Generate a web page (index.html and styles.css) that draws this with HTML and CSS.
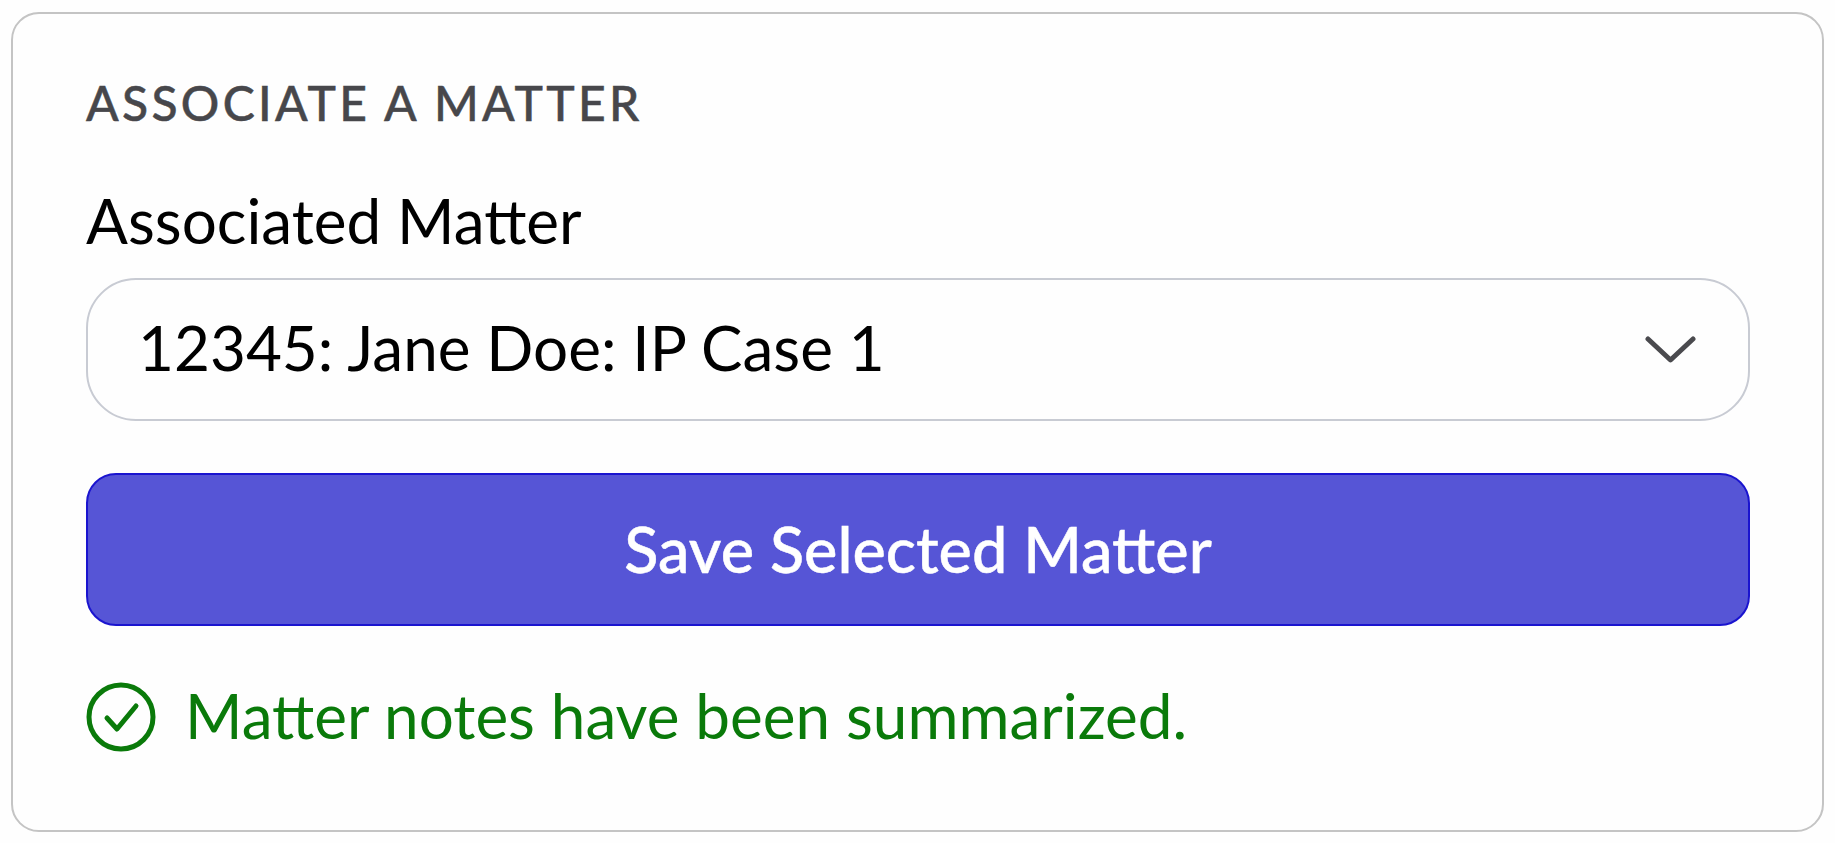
FILE: index.html
```html
<!DOCTYPE html>
<html lang="en">

<head>
    <meta charset="UTF-8">
    <meta name="viewport" content="width=device-width, initial-scale=1.0">
    <title>Associate a Matter</title>
    <link rel="stylesheet" href="styles.css">
</head>

<body>
    <div class="card">
        <h2 class="heading">ASSOCIATE A MATTER</h2>
        <label class="label">Associated Matter</label>
        <div class="select">
            <span class="select-text">12345: Jane Doe: IP Case 1</span>
            <svg class="chevron" viewBox="0 0 51 27" fill="none" stroke="#4a4a4e" stroke-width="5" stroke-linecap="round" stroke-linejoin="round">
                <path d="M3 3L25.500 24L48 3" />
            </svg>
        </div>
        <button class="save">Save Selected Matter</button>
        <div class="status">
            <svg class="check" viewBox="0 0 70 70" fill="none" stroke="#0a7a0a" stroke-width="5" stroke-linecap="round" stroke-linejoin="round">
                <circle cx="35" cy="35" r="32" />
                <path d="M21 36L31 47L50 24" />
            </svg>
            <span class="status-text">Matter notes have been summarized.</span>
        </div>
    </div>
</body>

</html>
```

FILE: styles.css
```css
* {
    box-sizing: border-box;
}

body {
    margin: 0;
    padding: 12px 11px;
    background-color: #fefefe;
    font-family: Lato, sans-serif;
}

.card {
    height: 820px;
    padding: 62px 72px 0 73px;
    background-color: #fefefe;
    border: 2px solid #c4c4c4;
    border-radius: 28px;
}

.heading {
    margin: 0;
    height: 54px;
    line-height: 54px;
    font-size: 48px;
    font-weight: 500;
    letter-spacing: 3.3px;
    color: #47474b;
    -webkit-text-stroke: 0.5px #47474b;
}

.label {
    display: block;
    margin-top: 60px;
    height: 60px;
    line-height: 60px;
    font-size: 62px;
    color: #000;
}

.select {
    display: flex;
    align-items: center;
    justify-content: space-between;
    height: 143px;
    margin-top: 28px;
    padding: 0 52px 0 50px;
    font-size: 62px;
    color: #000;
    border: 2px solid #c8cbd3;
    border-radius: 50px;
}

.select-text {
    padding-bottom: 6px;
}

.chevron {
    width: 51px;
    height: 27px;
}

.save {
    display: block;
    width: 100%;
    height: 153px;
    margin-top: 52px;
    padding-bottom: 4px;
    font-family: Lato, sans-serif;
    font-size: 63px;
    font-weight: 500;
    color: #fff;
    -webkit-text-stroke: 0.5px #fff;
    background-color: #5655d6;
    border: 2px solid #1a14cf;
    border-radius: 30px;
}

.status {
    display: flex;
    align-items: center;
    gap: 29px;
    margin-top: 52px;
    font-size: 62px;
    color: #0a7a0a;
}

.status-text {
    padding-bottom: 4px;
}

.check {
    width: 70px;
    height: 70px;
    flex-shrink: 0;
}
```
